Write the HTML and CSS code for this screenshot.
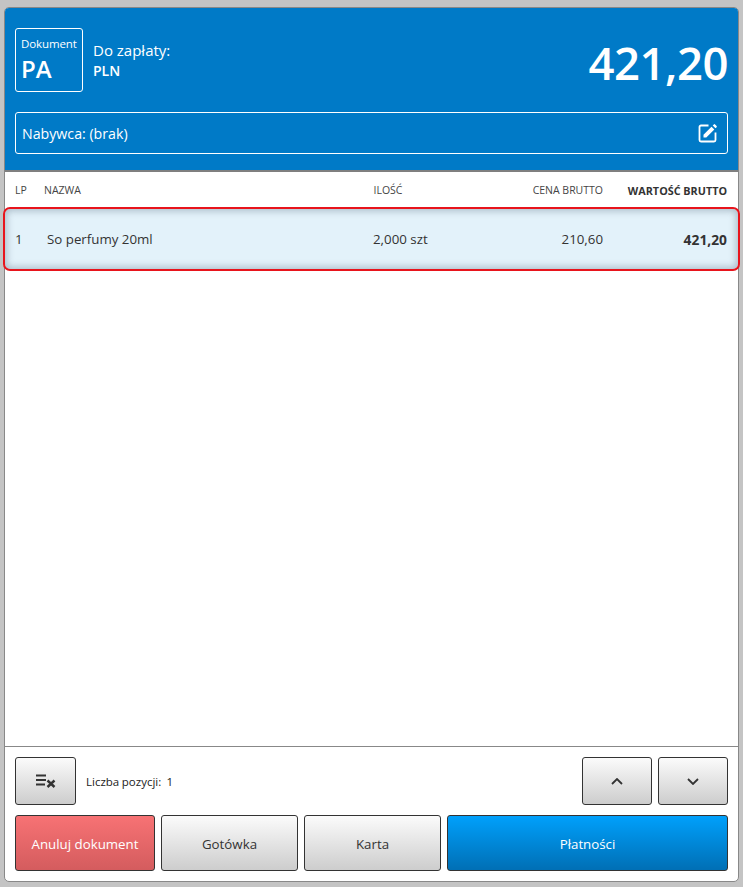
FILE: index.html
```html
<!DOCTYPE html>
<html lang="pl">
<head>
<meta charset="utf-8">
<title>Dokument PA</title>
<link rel="stylesheet" href="styles.css">
</head>
<body>
<main class="window">
  <header class="top">
    <div class="summary">
      <div class="doc"><span class="doc-label">Dokument</span><span class="doc-type">PA</span></div>
      <div class="pay"><span class="pay-label">Do zapłaty:</span><span class="pay-cur">PLN</span></div>
      <div class="total">421,20</div>
    </div>
    <div class="buyer">
      <span>Nabywca: (brak)</span>
      <svg class="edit" viewBox="0 0 20 20" width="20" height="20" aria-hidden="true">
        <path d="M10.500 2.500H3a1.500 1.500 0 0 0-1.500 1.500v13A1.500 1.500 0 0 0 3 18.500h13a1.500 1.500 0 0 0 1.500-1.500V9.500" fill="none" stroke="#fff" stroke-width="1.800"/>
        <path d="M5.500 14.500v-2.800L13.500 3.700l2.800 2.800-8 8zM14.700 2.500l1.100-1.100a.9.9 0 0 1 1.300 0l1.500 1.500a.9.9 0 0 1 0 1.300l-1.100 1.100z" fill="#fff"/>
      </svg>
    </div>
  </header>
  <section class="list">
    <div class="row head">
      <span class="c-lp">LP</span><span class="c-name">NAZWA</span><span class="c-qty">ILOŚĆ</span><span class="c-price">CENA BRUTTO</span><span class="c-val">WARTOŚĆ BRUTTO</span>
    </div>
    <div class="row item">
      <span class="c-lp">1</span><span class="c-name">So perfumy 20ml</span><span class="c-qty">2,000 szt</span><span class="c-price">210,60</span><span class="c-val">421,20</span>
    </div>
  </section>
  <footer class="foot">
    <div class="tools">
      <button class="btn tool clear" type="button" aria-label="Wyczyść">
        <svg viewBox="0 0 20 14" width="20" height="14" aria-hidden="true">
          <path d="M0 1.500h10M0 6h10M0 10.500h9" stroke="#333" stroke-width="1.800" fill="none"/>
          <path d="M11.500 6.500l7 6.500M18.500 6.500l-7 6.500" stroke="#333" stroke-width="2.400" fill="none"/>
        </svg>
      </button>
      <span class="count">Liczba pozycji:&nbsp; 1</span>
      <button class="btn tool nav" type="button" aria-label="W górę">
        <svg viewBox="0 0 12 7" width="12" height="7" aria-hidden="true"><path d="M1 6l5-5 5 5" fill="none" stroke="#333" stroke-width="1.800"/></svg>
      </button>
      <button class="btn tool nav" type="button" aria-label="W dół">
        <svg viewBox="0 0 12 7" width="12" height="7" aria-hidden="true"><path d="M1 1l5 5 5-5" fill="none" stroke="#333" stroke-width="1.800"/></svg>
      </button>
    </div>
    <div class="actions">
      <button class="btn big danger" type="button">Anuluj dokument</button>
      <button class="btn big cash" type="button">Gotówka</button>
      <button class="btn big cash" type="button">Karta</button>
      <button class="btn big primary" type="button">Płatności</button>
    </div>
  </footer>
</main>
</body>
</html>
```
FILE: styles.css
```css
* { box-sizing: border-box; }
html, body { height: 100%; }
body {
  margin: 0;
  padding: 7px 4px 5px 4px;
  background: #c4c4c4;
  font-family: "Open Sans", "Noto Sans", sans-serif;
  color: #333;
  overflow: hidden;
}
.window {
  height: 875px;
  display: flex;
  flex-direction: column;
  background: #fff;
  border: 1px solid #888;
  border-radius: 5px;
}
.top {
  height: 164px;
  flex: none;
  background: #007ac7;
  color: #fff;
  border-bottom: 2px solid #7f7f7f;
  border-radius: 4px 4px 0 0;
  padding: 20px 10px 0;
}
.summary { display: flex; align-items: flex-start; height: 64px; }
.doc {
  width: 68px;
  height: 64px;
  border: 1px solid #fff;
  border-radius: 3px;
  padding: 6px 0 0 5px;
  display: flex;
  flex-direction: column;
}
.doc-label { font-size: 11.500px; line-height: 18px; letter-spacing: -0.1px; white-space: nowrap; }
.doc-type { font-size: 24px; line-height: 30px; font-weight: 600; margin-top: 1px; }
.pay { margin-left: 10px; padding-top: 12px; display: flex; flex-direction: column; }
.pay-label { font-size: 15px; line-height: 20px; }
.pay-cur { font-size: 14px; line-height: 20px; font-weight: 600; margin-top: 1px; }
.total {
  margin-left: auto;
  font-size: 45.500px;
  line-height: 70px;
  margin-top: -1px;
  font-weight: 550;
  letter-spacing: -0.5px;
}
.buyer {
  margin-top: 20px;
  height: 42px;
  border: 1px solid #fff;
  border-radius: 3px;
  padding: 0 9px 0 6px;
  display: flex;
  align-items: center;
  justify-content: space-between;
  font-size: 14.200px;
}
.list { flex: 1; min-height: 0; }
.row { display: flex; align-items: center; }
.row span { flex: none; white-space: nowrap; }
.head {
  height: 36px;
  padding: 0 10px;
  font-size: 10.500px;
  color: #444;
}
.c-lp { width: 29px; }
.c-name { width: 329.500px; }
.c-qty { width: 100px; }
.c-price { width: 129.500px; text-align: right; }
.c-val { width: 124px; text-align: right; }
.head .c-val { font-weight: 700; font-size: 10.800px; color: #333; }
.item {
  height: 60px;
  margin-top: 1px;
  padding: 0 10px;
  font-size: 13.300px;
  background: #e3f2fa;
  border-radius: 5px;
  outline: 2px solid #e8141c;
  box-shadow: inset 0 0 7px 2px rgba(90, 110, 130, .4);
}
.item .c-lp { width: 32px; }
.item .c-name { width: 326px; }
.item .c-price { width: 130px; }
.item .c-val { font-weight: 700; font-size: 13.800px; }
.foot {
  flex: none;
  height: 135px;
  border-top: 1px solid #888;
  padding: 10px;
  display: flex;
  flex-direction: column;
  gap: 10px;
}
.tools { display: flex; align-items: center; gap: 6px; }
.actions { display: flex; gap: 6px; }
.btn {
  display: flex;
  align-items: center;
  justify-content: center;
  padding: 0;
  border: 1px solid #333;
  border-radius: 3px;
  font-family: inherit;
  font-size: 13.300px;
  color: #333;
  background: linear-gradient(#fbfbfb, #cdcdcd);
}
.tool { height: 48px; }
.clear { width: 61px; }
.count { font-size: 11.500px; color: #222; margin-left: 4px; margin-right: auto; word-spacing: -0.4px; }
.nav { width: 70px; }
.big { height: 56px; flex: none; padding-top: 2px; }
.danger { width: 140px; color: #fff; background: linear-gradient(#f77274, #d45c5e); }
.cash { width: 137px; }
.primary { width: 281px; color: #fff; background: linear-gradient(#00a0fb, #006fb5); }
```
